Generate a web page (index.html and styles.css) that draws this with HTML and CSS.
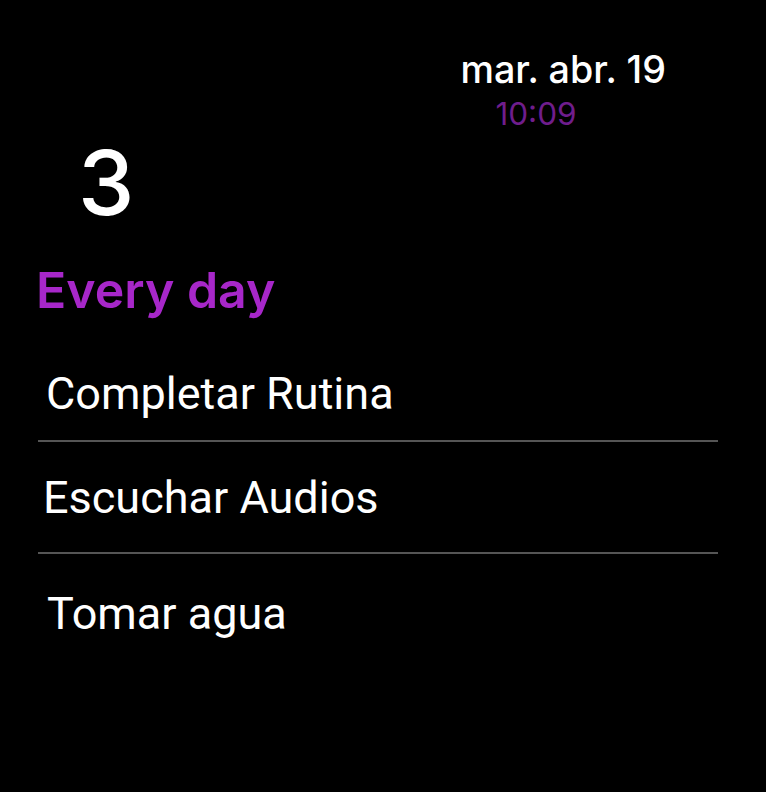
FILE: index.html
```html
<!DOCTYPE html>
<html lang="es">
<head>
    <meta charset="UTF-8">
    <meta name="viewport" content="width=device-width, initial-scale=1.0">
    <title>Every day</title>
    <link rel="stylesheet" href="styles.css">
</head>
<body>
    <div class="header">
        <div class="clock">
            <div class="date">mar. abr. 19</div>
            <div class="time">10:09</div>
        </div>
    </div>

    <div class="count">3</div>

    <h1 class="title">Every day</h1>

    <ul class="tasks">
        <li class="task task-first">Completar Rutina</li>
        <li class="task task-second">Escuchar Audios</li>
        <li class="task task-third">Tomar agua</li>
    </ul>
</body>
</html>
```

FILE: styles.css
```css
body {
    margin: 0;
    background: #000;
    color: #fff;
    font-family: Inter, "Noto Sans", sans-serif;
    width: 766px;
    height: 792px;
    overflow: hidden;
}
.header {
    display: flex;
    justify-content: flex-end;
    padding: 47px 100px 0 0;
}
.clock {
    display: flex;
    flex-direction: column;
}
.date {
    font-size: 37.7px;
    font-weight: 500;
    line-height: 44px;
}
.time {
    font-size: 31.5px;
    line-height: 34px;
    margin-top: 6px;
    color: #6f1d8c;
    padding-left: 35px;
}
.count {
    font-size: 90px;
    font-weight: 500;
    line-height: 100px;
    padding-left: 78px;
    margin-top: 2px;
}
.title {
    margin: 27px 0 0;
    padding-left: 36px;
    font-size: 50px;
    font-weight: 600;
    line-height: 60px;
    color: #a727c9;
}
.tasks {
    list-style: none;
    margin: 18px 48px 0 38px;
    padding: 0;
}
.task {
    font-family: Roboto, sans-serif;
    font-size: 45px;
    line-height: 52px;
    padding: 30px 0 28px 8px;
}
.task + .task {
    border-top: 2px solid #555;
}
.task-first {
    padding-bottom: 20px;
}
.task-second {
    padding-left: 5px;
}
.task-third {
    padding-top: 34px;
    padding-left: 9px;
}
```
